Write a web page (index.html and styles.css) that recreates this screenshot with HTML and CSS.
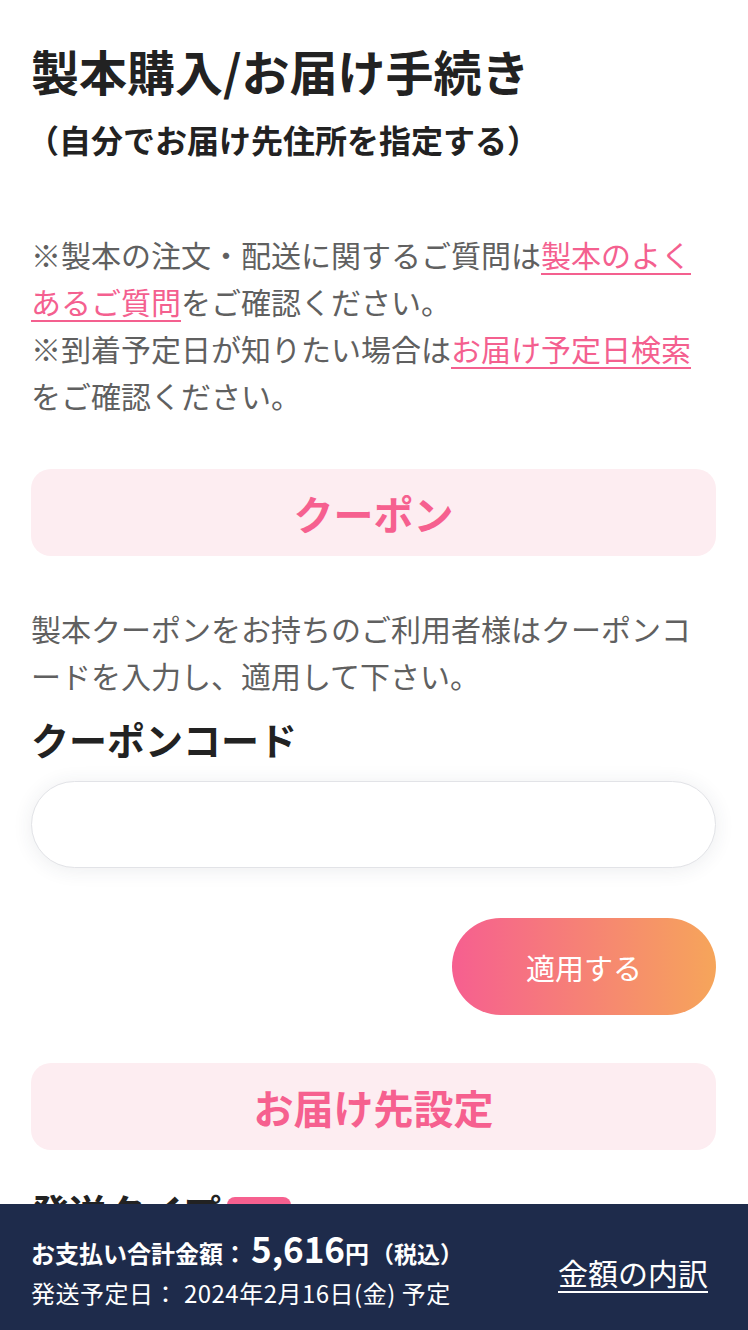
FILE: index.html
```html
<!DOCTYPE html>
<html lang="ja">

<head>
    <meta charset="UTF-8">
    <meta name="viewport" content="width=device-width, initial-scale=1.0">
    <title>製本購入/お届け手続き</title>
    <link rel="stylesheet" href="styles.css">
</head>

<body>
    <div class="container">
        <h1 class="page-title">製本購入/お届け手続き</h1>
        <p class="page-sub">（自分でお届け先住所を指定する）</p>

        <p class="note">
            ※製本の注文・配送に関するご質問は<a href="#" class="link">製本のよくあるご質問</a>をご確認ください。<br>
            ※到着予定日が知りたい場合は<a href="#" class="link">お届け予定日検索</a>をご確認ください。
        </p>

        <h2 class="section-head">クーポン</h2>
        <p class="note note-coupon">製本クーポンをお持ちのご利用者様はクーポンコードを入力し、適用して下さい。</p>

        <form id="couponForm">
            <label for="coupon" class="field-label">クーポンコード</label>
            <input type="text" id="coupon" name="coupon" class="text-input">
            <div class="button-container">
                <button type="submit" class="action-button">適用する</button>
            </div>
        </form>

        <h2 class="section-head section-delivery">お届け先設定</h2>
        <div class="field-label label-row">
            <span>発送タイプ</span>
            <span class="badge">必須</span>
        </div>
    </div>

    <footer class="pay-bar">
        <div class="pay-info">
            <div class="pay-total">お支払い合計金額：<span class="pay-price">5,616</span>円<span class="pay-tax">（税込）</span></div>
            <div class="pay-date">発送予定日： 2024年2月16日(金) 予定</div>
        </div>
        <a href="#" class="pay-detail">金額の内訳</a>
    </footer>
</body>

</html>
```

FILE: styles.css
```css
body {
    font-family: "Noto Sans CJK JP", "Noto Sans", sans-serif;
    margin: 0;
    background-color: #fff;
    color: #222;
}

.container {
    padding: 39px 32px 0 31px;
}

.page-title {
    margin: 0;
    font-size: 48px;
    line-height: 62px;
    font-weight: 700;
    color: #222;
}

.page-sub {
    margin: 16px 0 0;
    font-size: 32px;
    line-height: 44px;
    font-weight: 700;
    color: #222;
    text-indent: -4px;
}

.note {
    margin: 70px 0 0;
    font-size: 30px;
    line-height: 47px;
    color: #606060;
}

.link {
    color: #f4608f;
    text-decoration: underline;
    text-underline-offset: 6px;
    text-decoration-thickness: 2px;
}

/* pink header boxes */
.section-head {
    margin: 50px 0 0;
    height: 87px;
    display: flex;
    justify-content: center;
    align-items: center;
    background-color: #fdedf1;
    border-radius: 20px;
    color: #f6608f;
    font-size: 40px;
    font-weight: 700;
}

.note-coupon {
    margin-top: 49px;
}

form {
    display: flex;
    flex-direction: column;
}

.field-label {
    margin-top: 15px;
    font-size: 38px;
    line-height: 50px;
    font-weight: 700;
    color: #222;
}

.text-input {
    margin-top: 17px;
    height: 87px;
    box-sizing: border-box;
    border: 1px solid #e2e3e7;
    border-radius: 44px;
    box-shadow: 0 2px 20px rgba(40, 50, 80, 0.09);
    padding: 0 30px;
    font-size: 28px;
    outline: none;
}

.button-container {
    display: flex;
    justify-content: flex-end;
    margin-top: 50px;
}

.action-button {
    width: 264px;
    height: 97px;
    border: none;
    border-radius: 49px;
    background: linear-gradient(90deg, #f65f90, #f6a55a);
    color: #fff;
    font-family: inherit;
    font-size: 29px;
    font-weight: 400;
    cursor: pointer;
}

.section-delivery {
    margin-top: 48px;
}

.label-row {
    margin-top: 36px;
    display: flex;
    align-items: center;
    gap: 6px;
}

.badge {
    background-color: #f6608f;
    color: #fff;
    font-size: 22px;
    line-height: 36px;
    padding: 0 10px;
    border-radius: 8px;
    margin-top: 8px;
}

/* fixed total bar */
.pay-bar {
    position: fixed;
    left: 0;
    right: 0;
    bottom: 0;
    height: 126px;
    box-sizing: border-box;
    padding: 5px 40px 0 31px;
    display: flex;
    justify-content: space-between;
    align-items: center;
    background-color: #1e2b4b;
    color: #fff;
}

.pay-total {
    font-size: 24px;
    line-height: 39px;
    font-weight: 700;
}

.pay-price {
    font-size: 35px;
    margin-left: 4px;
}

.pay-tax {
    font-size: 23px;
    margin-left: 2px;
}

.pay-date {
    font-size: 24px;
    line-height: 39px;
    letter-spacing: 0.5px;
}

.pay-detail {
    color: #fff;
    font-size: 30px;
    text-decoration: underline;
    text-underline-offset: 6px;
    text-decoration-thickness: 2px;
    margin-top: 4px;
}
```
